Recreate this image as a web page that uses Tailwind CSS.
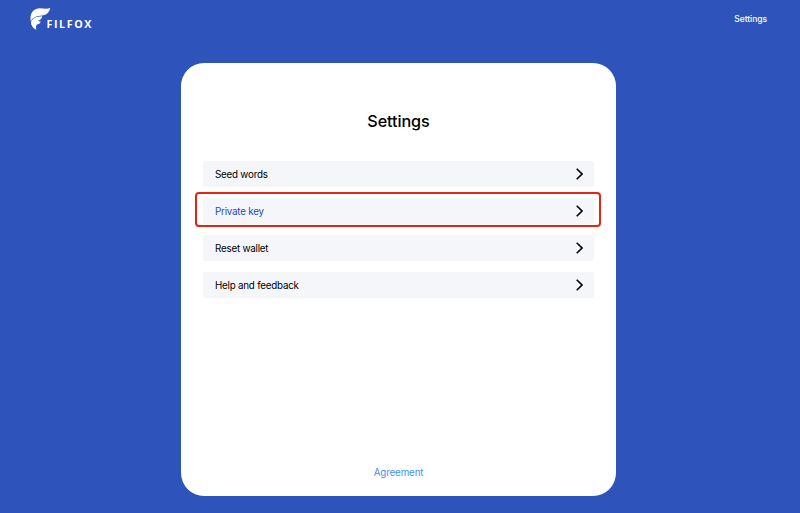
<!DOCTYPE html>
<html lang="en">
<head>
<meta charset="utf-8">
<title>Filfox Settings</title>
<script src="https://cdn.jsdelivr.net/npm/@tailwindcss/browser@4"></script>
</head>
<body class="h-[513px] overflow-hidden bg-[#2e53bb] font-['Inter',sans-serif] text-black">
<header class="flex h-[63px] items-start justify-between pl-[30px] pr-[33px]">
  <div class="flex pt-[7px] text-white">
    <svg class="h-[24px] w-[21px] shrink-0" viewBox="0 0 21 24" fill="currentColor" aria-hidden="true">
      <path d="M0.7 14.2C-0.4 6.4 3 2 8.5 1.4C12.5 1.1 16 2.3 20.2 1.1C19.3 5.8 16.4 8.2 12 8.5C7 8.9 3 10 0.7 14.2Z"/>
      <path d="M0.9 15C2.8 11 6 9.5 12.2 9.3C11.8 11.9 10.2 13.4 7.7 13.7C8.6 14.4 9.6 14.6 10.8 14.4C10 16.4 8.6 17.2 6.9 17.5C5.9 18.8 5.8 20.6 6.4 22.8C2.8 21.2 1 18.4 0.9 15Z"/>
    </svg>
    <span class="-ml-[4.5px] pt-[11px] text-[10.7px] leading-[12px] font-bold tracking-[1.6px] font-['Open_Sans',sans-serif]">FILFOX</span>
  </div>
  <a class="pt-[13px] text-[8.5px] leading-[12px] font-medium tracking-[-0.05px] text-white">Settings</a>
</header>
<main class="ml-[181px] flex h-[433px] w-[435px] flex-col rounded-[23px] bg-white px-[22px] pt-[47px]">
  <h1 class="text-center text-[16.2px] leading-[22px] font-medium tracking-[-0.1px]">Settings</h1>
  <nav class="mt-[29px] flex flex-col gap-[11px] text-[9.8px] leading-[24px] tracking-[-0.22px]">
    <a class="flex h-[26px] items-center justify-between rounded-[2px] bg-[#f5f6fa] pl-[12px] pr-[11px]"><span class="pt-[2px]">Seed words</span>
      <svg class="h-[12px] w-[7px]" viewBox="0 0 7 12" fill="none" stroke="currentColor" stroke-width="1.6"><path d="M.7 .8L6 6L.7 11.2"/></svg></a>
    <a class="relative flex h-[26px] items-center justify-between rounded-[2px] bg-[#f5f6fa] pl-[12px] pr-[11px] text-[#2948bd]"><span class="pt-[2px]">Private key</span>
      <svg class="h-[12px] w-[7px] text-black" viewBox="0 0 7 12" fill="none" stroke="currentColor" stroke-width="1.6"><path d="M.7 .8L6 6L.7 11.2"/></svg>
      <span class="absolute -top-[6px] -right-[6.5px] -bottom-[3px] -left-[8.5px] rounded-[4px] border-2 border-[#e42313]"></span></a>
    <a class="flex h-[26px] items-center justify-between rounded-[2px] bg-[#f5f6fa] pl-[12px] pr-[11px]"><span class="pt-[2px]">Reset wallet</span>
      <svg class="h-[12px] w-[7px]" viewBox="0 0 7 12" fill="none" stroke="currentColor" stroke-width="1.6"><path d="M.7 .8L6 6L.7 11.2"/></svg></a>
    <a class="flex h-[26px] items-center justify-between rounded-[2px] bg-[#f5f6fa] pl-[12px] pr-[11px]"><span class="pt-[2px]">Help and feedback</span>
      <svg class="h-[12px] w-[7px]" viewBox="0 0 7 12" fill="none" stroke="currentColor" stroke-width="1.6"><path d="M.7 .8L6 6L.7 11.2"/></svg></a>
  </nav>
  <a class="mt-auto mb-[16px] text-center text-[9.8px] leading-[14px] tracking-[-0.15px] text-[#4290f7]">Agreement</a>
</main>
</body>
</html>
